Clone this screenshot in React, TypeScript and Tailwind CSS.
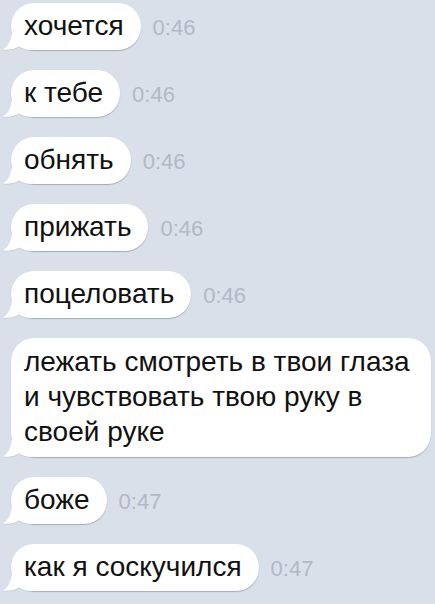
const messages = [
  { lines: ['хочется'], time: '0:46' },
  { lines: ['к тебе'], time: '0:46' },
  { lines: ['обнять'], time: '0:46' },
  { lines: ['прижать'], time: '0:46' },
  { lines: ['поцеловать'], time: '0:46' },
  { lines: ['лежать смотреть в твои глаза', 'и чувствовать твою руку в', 'своей руке'], time: '' },
  { lines: ['боже'], time: '0:47' },
  { lines: ['как я соскучился'], time: '0:47' },
];

const Tail = () => (
  <svg
    className="absolute -left-[9px] bottom-[-1px]"
    width="30"
    height="22"
    viewBox="0 0 30 22"
  >
    <path
      d="M10 0 C10 8 8 16 1 20.5 C7 21.5 13 20 17 17.5 C21 20 25 21 30 21 L30 0 Z"
      fill="#c3cad5"
      transform="translate(0 0.8)"
    />
    <path
      d="M10 0 C10 8 8 16 1 20.5 C7 21.5 13 20 17 17.5 C21 20 25 21 30 21 L30 0 Z"
      fill="#ffffff"
    />
  </svg>
);

const Bubble = ({ lines, time }: { lines: string[]; time: string }) => {
  const multi = lines.length > 1;
  return (
    <div className="flex items-center gap-[12px]">
      <div className="relative ml-[11px]">
        <div
          className={
            multi
              ? 'relative rounded-[23px] bg-white pl-[13px] pr-[21px] pt-[6px] pb-[8px] text-[28px] leading-[35px] text-[#111] shadow-[0_1px_1px_rgba(120,130,150,0.55)]'
              : 'relative rounded-[23px] bg-white pl-[13px] pr-[17px] pt-[6px] pb-[7px] text-[28px] leading-[34px] text-[#111] shadow-[0_1px_1px_rgba(120,130,150,0.55)]'
          }
        >
          <Tail />
          {lines.map((l, i) => (
            <div key={i} className="relative whitespace-nowrap">
              {l}
            </div>
          ))}
        </div>
      </div>
      {time && <span className="mt-[2px] text-[22px] text-[#b0b9c7]">{time}</span>}
    </div>
  );
};

export default function App() {
  return (
    <div
      className="h-[604px] w-[435px] overflow-hidden bg-[#dae0e9] pt-[3px]"
      style={{ fontFamily: '"Liberation Sans", Arial, sans-serif' }}
    >
      <div className="flex flex-col gap-[20px]">
        {messages.map((m, i) => (
          <Bubble key={i} lines={m.lines} time={m.time} />
        ))}
      </div>
    </div>
  );
}
